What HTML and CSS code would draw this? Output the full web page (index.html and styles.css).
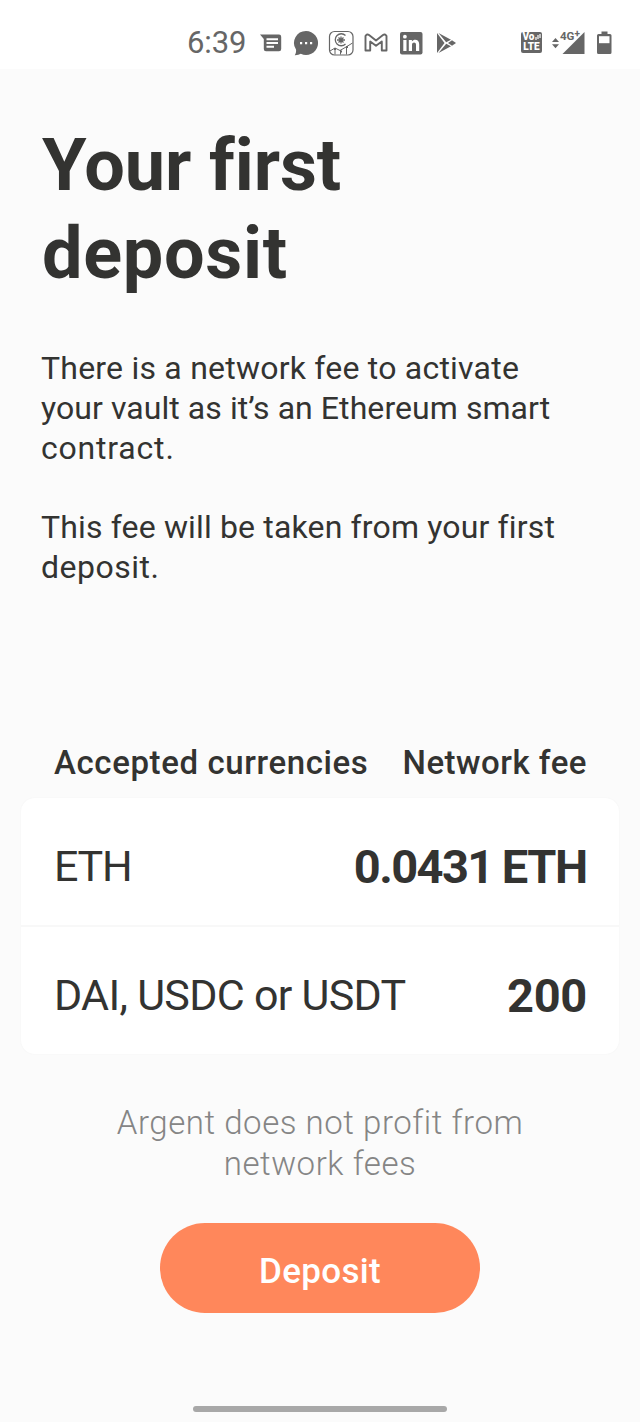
FILE: index.html
```html
<!DOCTYPE html>
<html lang="en">
<head>
<meta charset="utf-8">
<title>Your first deposit</title>
<link rel="stylesheet" href="styles.css">
</head>
<body>
<header class="status">
  <span class="clock">6:39</span>
  <div class="notifications">
    <svg width="24" height="24" viewBox="0 0 24 24"><path fill="#666" d="M0 3.500H19a2.200 2.200 0 0 1 2.200 2.200V18a2.200 2.200 0 0 1-2.200 2.200H6A2.200 2.200 0 0 1 3.800 18V8z"/><path stroke="#fff" stroke-width="2" d="M6.500 8.200H18M6.500 12H18M6.500 15.800H14"/></svg>
    <svg width="26" height="26" viewBox="0 0 26 26"><path fill="#666" d="M13 1a12 12 0 1 1-5.200 22.800Q5.500 25.300 1.800 25.200 3.500 22.500 3 19.600A12 12 0 0 1 13 1z"/><path fill="#fff" d="M7 12h2.200v2.200H7zM12 12h2.200v2.200H12zM17 12h2.200v2.200H17z"/></svg>
    <svg width="26" height="26" viewBox="0 0 26 26" fill="none" stroke="#666"><rect x="1.500" y="1.500" width="23.500" height="23.500" rx="5" stroke-width="1.200"/><path stroke-width="1.300" d="M17.500 5.500a6 6 0 1 0 0 8.500M9 10h8M13 6.500v7M10.500 7.500l5 5M15.500 7.500l-5 5"/><path d="M2 21l5-3 5 2.500 6-3.500 6.500-4M7 18v6.500M12.500 20v4.500M18.500 16v8.500"/><path stroke-width="2" d="M6 19h2M12 21.500h2M18 17h2"/></svg>
    <svg width="26" height="26" viewBox="0 0 26 26"><path fill="none" stroke="#666" stroke-width="1.900" stroke-linejoin="round" d="M2.500 6Q4 3.500 6 5L13 10.500 20 5q2-1.500 3.500 1V20.500H18.800V11.500L13 15.800 7.200 11.500v9H2.500z"/></svg>
    <svg width="26" height="26" viewBox="0 0 26 26"><rect x="2" y="2" width="22.500" height="22.500" rx="2" fill="#666"/><path fill="#fff" d="M5.300 10h3.200v11H5.300zM10.800 10h3.100v1.500c2-2.800 7.300-2.300 7.300 2.700V21H18v-6.200c0-3.200-4-3-4 0V21h-3.200z"/><circle cx="6.900" cy="6.700" r="1.900" fill="#fff"/></svg>
    <svg width="26" height="26" viewBox="0 0 26 26"><path fill="#666" d="M4 3L11.500 13 4 23zM5.500 3L18 9.700 13.200 12.300zM5.500 23L18 16.300 13.200 13.700z"/><path fill="#666" d="M19 10.200L23 13 19 15.800 15 13z"/></svg>
  </div>
  <div class="radios">
    <div class="volte"><span class="vo">Vo<svg width="6" height="6" viewBox="0 0 6 6"><path stroke="#fff" stroke-width="1.200" d="M1 6V3M3 5V1M5 4V0"/></svg></span><span>LTE</span></div>
    <div class="signal">
      <svg width="34" height="26" viewBox="0 0 34 26"><path fill="#666" d="M0 12L3.500 8 7 12zM0 14.300H7L3.500 18.300zM10.500 24L32.500 2V24z"/></svg>
      <span class="network">4G<sup>+</sup></span>
    </div>
    <svg class="battery" width="16" height="26" viewBox="0 0 16 26"><path fill="#666" d="M4.500 1.500h6V4H13A1.500 1.500 0 0 1 14.500 5.500v17a1.500 1.500 0 0 1-1.500 1.500h-11.500A1.500 1.500 0 0 1 0 22.500V5.500a1.500 1.500 0 0 1 1.500-1.500H4.500z"/><path fill="#fff" d="M2 6.200h10.500v7H2z"/></svg>
  </div>
</header>
<main class="screen">
  <h1 class="title"><span class="t1">Your first</span><br><span class="t2">deposit</span></h1>
  <p class="copy"><span class="c1">There is a network fee to activate</span><br><span class="c2">your vault as it’s an Ethereum smart</span><br><span class="c3">contract.</span></p>
  <p class="copy"><span class="c4">This fee will be taken from your first</span><br><span class="c5">deposit.</span></p>
  <section class="fees">
    <div class="labels"><span class="l1">Accepted currencies</span><span class="l2">Network fee</span></div>
    <div class="card">
      <div class="row"><span class="coin eth">ETH</span><strong class="fee"><span class="digits">0.0431</span><span class="unit">ETH</span></strong></div>
      <div class="row"><span class="coin stable">DAI, USDC or USDT</span><strong class="fee amount">200</strong></div>
    </div>
  </section>
  <p class="note">Argent does not profit from<br>network fees</p>
  <button class="deposit">Deposit</button>
</main>
<div class="homebar"></div>
</body>
</html>
```
FILE: styles.css
```css
* { box-sizing: border-box; }
body {
  margin: 0;
  width: 640px;
  height: 1422px;
  display: flex;
  flex-direction: column;
  overflow: hidden;
  background: #fbfbfb;
  color: #333331;
  font-family: Roboto, "Liberation Sans", sans-serif;
  font-variant-ligatures: none;
}
.status {
  height: 69px;
  flex: none;
  display: flex;
  align-items: center;
  padding: 16px 27px 0 187px;
  background: #fff;
  color: #666;
}
.clock { width: 73px; font-size: 31px; letter-spacing: -0.1px; }
.notifications { display: flex; gap: 9px; align-items: center; }
.radios { display: flex; align-items: center; margin-left: auto; }
.volte {
  width: 21px;
  height: 21px;
  border-radius: 2px;
  background: #666;
  color: #fff;
  font: 900 10px/10px Roboto, sans-serif;
  display: flex;
  flex-direction: column;
  align-items: center;
  margin-right: 10px;
}
.volte span { height: 10px; white-space: nowrap; }
.vo { display: flex; align-items: center; }
.signal { position: relative; height: 26px; margin-right: 11px; }
.network { position: absolute; left: 8px; top: 0; font: bold 11.500px/12px Roboto, sans-serif; white-space: nowrap; }
.network sup { font-size: 10px; line-height: 1px; vertical-align: 3px; }
.screen { display: flex; flex-direction: column; padding: 53px 21px 0; }
.title { margin: 0 0 51px 21px; font-size: 72px; line-height: 88px; font-weight: 700; white-space: nowrap; }
.t1 { letter-spacing: -0.1px; }
.t2 { letter-spacing: 0.7px; }
.copy { margin: 0 0 39.800px 20px; font-size: 32px; line-height: 39.800px; white-space: nowrap; }
.c1 { letter-spacing: 0.22px; }
.c2 { letter-spacing: 0.07px; }
.c3 { letter-spacing: 0.8px; }
.c4 { letter-spacing: 0.15px; }
.c5 { letter-spacing: 0.5px; }
.fees { margin-top: 114px; }
.labels {
  display: flex;
  justify-content: space-between;
  padding: 0 32px 0 33px;
  height: 56px;
  font-size: 33px;
  line-height: 41px;
  font-weight: 550;
  white-space: nowrap;
}
.l1 { letter-spacing: 0.6px; }
.l2 { letter-spacing: 0.5px; }
.card { height: 256px; border-radius: 14px; background: #fff; box-shadow: 0 0 2px #f3f3f3; }
.row { height: 127px; display: flex; justify-content: space-between; align-items: flex-start; padding: 38px 32px 0 33px; white-space: nowrap; }
.row + .row { height: 129px; border-top: 2px solid #f8f8f8; }
.coin { font-size: 43px; line-height: 60px; letter-spacing: -0.7px; }
.eth { letter-spacing: -1.300px; }
.fee { font-size: 47px; line-height: 61px; }
.amount { letter-spacing: -0.3px; }
.digits { letter-spacing: -1.600px; margin-right: 9px; }
.unit { letter-spacing: -1.300px; }
.note { margin: 48px 0 0; text-align: center; color: #858585; font-size: 33px; line-height: 41.500px; font-weight: 350; letter-spacing: 0.55px; }
.deposit {
  width: 320px;
  height: 90px;
  margin: 38.500px auto 0;
  padding: 8px 0 0;
  border: 0;
  border-radius: 45px;
  background: #ff875b;
  color: #fff;
  font: 500 35px/42px Roboto, sans-serif;
  letter-spacing: 0.3px;
}
.homebar { width: 254px; height: 6px; margin: auto auto 10px; border-radius: 3px; background: #a8a8a8; }
```
